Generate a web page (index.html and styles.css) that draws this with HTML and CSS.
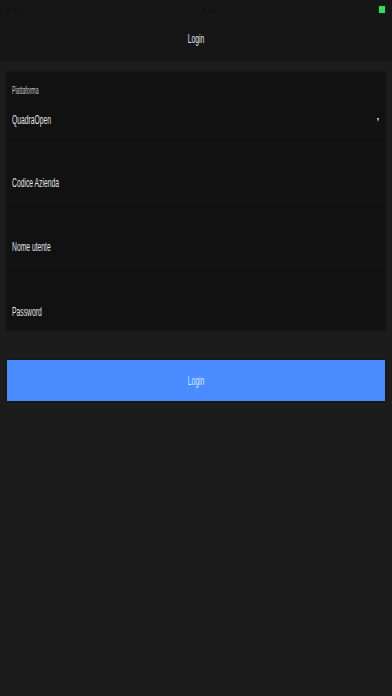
FILE: index.html
```html
<!DOCTYPE html>
<html>
<head>
<meta charset="utf-8">
<link rel="stylesheet" href="styles.css">
</head>
<body>
<div class="top">
  <div class="status">
    <span class="st-left">iPad</span>
    <span class="st-mid">9:41</span>
    <span class="battery"></span>
  </div>
  <div class="nav"><span class="nt">Login</span></div>
</div>
<div class="card">
  <div class="row row-first">
    <span class="label nt-left">Piattaforma</span>
    <div class="select">
      <span class="value nt-left">QuadraOpen</span>
      <span class="caret"></span>
    </div>
  </div>
  <div class="row row-b"><span class="value nt-left">Codice Azienda</span></div>
  <div class="row"><span class="value nt-left">Nome utente</span></div>
  <div class="row row-last"><span class="value nt-left">Password</span></div>
</div>
<div class="btn"><span class="nt">Login</span></div>
</body>
</html>
```
FILE: styles.css
```css
html, body {
  margin: 0;
  padding: 0;
  background: #1c1c1c;
  font-family: "Liberation Sans", Arial, sans-serif;
  color: #e6e6e6;
  height: 696px;
  overflow: hidden;
}
.top {
  background: #161616;
}
.status {
  height: 20px;
  display: flex;
  align-items: center;
  justify-content: space-between;
  padding: 0 7px 0 6px;
  font-size: 8px;
  color: #101010;
}
.st-mid {
  margin-left: 18px;
}
.battery {
  width: 6px;
  height: 7px;
  background: #3bd65a;
  box-shadow: 0 0 2px #1a6a2a;
  margin-top: -1px;
}
.nav {
  height: 42px;
  display: flex;
  align-items: center;
  justify-content: center;
  font-size: 13px;
  color: #e8e8e8;
  padding-bottom: 6px;
  box-sizing: border-box;
}
.nt {
  display: inline-block;
  transform: scaleX(0.52);
  transform-origin: center;
}
.nt-left {
  display: inline-block;
  transform: scaleX(0.52);
  transform-origin: left center;
  white-space: nowrap;
}
.card {
  margin: 10px 7px 0 7px;
  background: #111111;
  box-shadow: 0 0 2px rgba(0,0,0,0.6);
}
.row {
  height: 64px;
  box-sizing: border-box;
  padding: 0 5px 10px 5px;
  display: flex;
  flex-direction: column;
  justify-content: flex-end;
  border-bottom: 1px solid #151515;
}
.row-b {
  height: 65px;
}
.row-last {
  border-bottom: none;
}
.row-first {
  justify-content: flex-start;
  padding-top: 13px;
  height: 65px;
}
.label {
  font-size: 10px;
  color: #c8c8c8;
  line-height: 12px;
}
.select {
  margin-top: 15px;
  display: flex;
  align-items: center;
  justify-content: space-between;
}
.value {
  font-size: 13px;
  color: #e2e2e2;
  line-height: 16px;
}
.caret {
  width: 0;
  height: 0;
  border-left: 1.5px solid transparent;
  border-right: 1.5px solid transparent;
  border-top: 4px solid #d8d8d8;
  margin-right: 1px;
}
.btn {
  margin: 30px 7px 0 7px;
  height: 41px;
  background: #4a8cff;
  display: flex;
  align-items: center;
  justify-content: center;
  font-size: 13px;
  color: #d8e6ff;
  box-shadow: 0 0 2px rgba(0,0,0,0.6);
}
```
